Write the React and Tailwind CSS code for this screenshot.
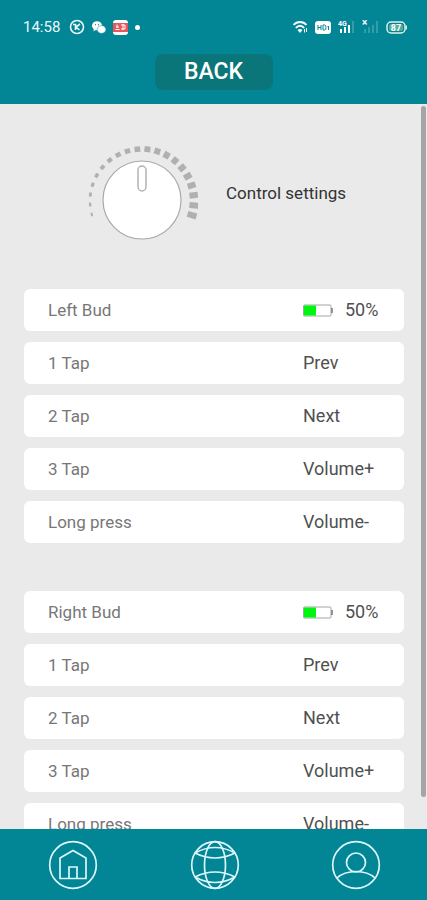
import React from "react";

const TEAL = "#028595";

const taps = [
  ["1 Tap", "Prev"],
  ["2 Tap", "Next"],
  ["3 Tap", "Volume+"],
  ["Long press", "Volume-"],
];

function SignalBars({ label, weak }) {
  return (
    <svg width="17" height="14" viewBox="0 0 17 14" aria-hidden="true">
      <text x="0" y="6" fontSize={weak ? 10 : 7} fontWeight="700" fill="#fff">{label}</text>
      <g fill="#fff" fillOpacity={weak ? 0.2 : 1}>
        <rect x="2" y="9" width="2" height="4" />
        <rect x="6" y="7" width="2" height="6" />
        <rect x="10" y="5" width="2" height="8" />
      </g>
      <rect x="14" y="1" width="2" height="12" fill="#fff" fillOpacity="0.2" />
    </svg>
  );
}

function StatusBar() {
  return (
    <div className="flex h-[54px] items-center justify-between pl-[23px] pr-5 text-[#e9f8fa]">
      <div className="flex items-center gap-[7px]">
        <span className="mr-0.5 text-[15px] leading-5">14:58</span>
        <svg width="16" height="16" viewBox="0 0 16 16" fill="none" stroke="currentColor" strokeWidth="1.600" aria-hidden="true">
          <circle cx="8" cy="8" r="6.500" />
          <path d="M6.500 5v6M11 5L7 8l3.500 3M4 5.500h3" />
        </svg>
        <svg width="14" height="13" viewBox="0 0 14 13" aria-hidden="true">
          <ellipse cx="5" cy="4.800" rx="5" ry="4.500" fill="#fff" />
          <path d="M2 7.500L1.500 10.500L5 8Z" fill="#fff" />
          <circle cx="3.500" cy="3.700" r="0.600" fill={TEAL} />
          <circle cx="6.500" cy="3.700" r="0.600" fill={TEAL} />
          <ellipse cx="9.500" cy="8.500" rx="4.400" ry="3.900" fill="#fff" stroke={TEAL} strokeWidth="0.500" />
        </svg>
        <svg width="15" height="15" viewBox="0 0 15 15" aria-hidden="true">
          <rect width="15" height="15" rx="3" fill="#fff" />
          <rect y="3" width="15" height="9" fill="#e5575b" />
          <path d="M4 4.500v3.500M2.500 9.500h4M3 7h3M8 5h4v4H8M10 4v6" stroke="#fff" strokeWidth="1" fill="none" />
        </svg>
        <span className="size-[5px] rounded-full bg-white" />
      </div>
      <div className="flex items-center gap-[7px]">
        <svg width="15" height="13" viewBox="0 0 15 13" fill="none" stroke="#fff" strokeWidth="1.800" aria-hidden="true">
          <path d="M0.500 4C4 0 10 0 13.500 4M2.800 7C5.500 4 8.500 4 11.200 7" />
          <path d="M4.500 9Q7 7 9.500 9L7 12Z" fill="#fff" stroke="none" />
          <path d="M11.500 8v3.500M13.500 7v4" strokeWidth="1" />
        </svg>
        <svg width="16" height="13" viewBox="0 0 16 13" aria-hidden="true">
          <rect width="16" height="13" rx="3" fill="#fff" />
          <path d="M3 4v5M6 4v5M3 6.500h3M8 4v5h1.500Q11 9 11 6.500T9.500 4H8M12.500 6l1-1v4" stroke={TEAL} strokeWidth="1" fill="none" />
        </svg>
        <SignalBars label="4G" />
        <SignalBars label="×" weak />
        <svg width="21" height="13" viewBox="0 0 21 13" aria-hidden="true">
          <rect x="1" y="1" width="18" height="11" rx="4" fill="none" stroke="#d9f3ee" strokeWidth="1.500" />
          <rect x="3" y="3" width="14" height="7" rx="2" fill="#5aa899" />
          <path d="M20.300 4.500v4" stroke="#d9f3ee" strokeWidth="1.300" />
          <text x="10" y="9.700" fontSize="9" fontWeight="700" fill="#fff" textAnchor="middle">87</text>
        </svg>
      </div>
    </div>
  );
}

function Knob() {
  const ticks = Array.from({ length: 20 }, (_, i) => ({
    angle: -105 + i * 11.1,
    depth: 2 + i * 0.38,
    width: Math.min(6, 3.5 + i * 0.25),
  }));
  return (
    <svg className="shrink-0" width="112" height="98" viewBox="0 0 112 98" aria-hidden="true">
      {ticks.map((t) => (
        <rect
          key={t.angle}
          x={56 - t.width / 2}
          y={5 - t.depth / 2}
          width={t.width}
          height={t.depth}
          fill="#b0b0b0"
          transform={`rotate(${t.angle} 56 57)`}
        />
      ))}
      <circle cx="56" cy="56" r="39" fill="#fff" stroke="#a9a9a9" strokeWidth="1.200" />
      <rect x="52" y="22" width="8" height="25" rx="4" fill="#fff" stroke="#b3b3b3" strokeWidth="1.500" />
    </svg>
  );
}

function Battery() {
  return (
    <svg width="30" height="13" viewBox="0 0 30 13" aria-hidden="true">
      <rect x="0.500" y="1" width="27.500" height="11" rx="1" fill="#fff" stroke="#a5a5a5" />
      <rect x="1" y="1.500" width="12" height="10" fill="#00f510" />
      <path d="M29 4v5" stroke="#777" strokeWidth="1.500" />
    </svg>
  );
}

const rowClass = "flex h-[42px] w-full items-center justify-between rounded-md bg-white pl-6 text-left leading-6";

function BudGroup({ name }) {
  return (
    <section className="flex flex-col gap-[11px]">
      <div className={rowClass}>
        <h2 className="text-[17px] text-[#777]">{name}</h2>
        <div className="flex w-[101px] items-center gap-3 text-lg leading-6 text-[#505050]">
          <Battery />
          <span>50%</span>
        </div>
      </div>
      {taps.map(([label, value]) => (
        <button key={label} type="button" className={rowClass}>
          <span className="text-[17px] text-[#777]">{label}</span>
          <span className="w-[101px] text-lg leading-6 text-[#505050]">{value}</span>
        </button>
      ))}
    </section>
  );
}

function NavIcon({ children }) {
  return (
    <svg width="50" height="50" viewBox="0 0 50 50" fill="none" stroke="#dcf7fb" strokeWidth="1.700" aria-hidden="true">
      <circle cx="25" cy="25" r="23.300" />
      {children}
    </svg>
  );
}

export default function App() {
  return (
    <div className="flex h-dvh flex-col bg-[#eaeaea] font-[Roboto,sans-serif]">
      <header className="flex h-[104px] shrink-0 flex-col items-center bg-[#028595]">
        <div className="w-full">
          <StatusBar />
        </div>
        <button type="button" className="h-9 w-[118px] rounded-lg bg-[#0b7679] text-[23px] font-medium leading-9 text-white">
          BACK
        </button>
      </header>

      <div className="relative min-h-0 flex-1">
        <main className="h-full overflow-y-auto pl-6 pr-[23px] [scrollbar-width:none]">
          <div className="flex h-[185px] items-center pb-[7px] pl-[62px]">
            <Knob />
            <h1 className="ml-7 text-[17px] leading-6 text-[#333]">Control settings</h1>
          </div>
          <div className="flex flex-col gap-12 pb-6">
            <BudGroup name="Left Bud" />
            <BudGroup name="Right Bud" />
          </div>
        </main>
        <div className="absolute right-px top-0.5 bottom-8 w-[5px] rounded-sm bg-[#a5a5a5]" />
      </div>

      <nav className="flex h-[71px] shrink-0 items-center justify-between bg-[#028595] pl-12 pr-[46px]">
        <a href="#home" aria-label="Home">
          <NavIcon>
            <path d="M12 38.500V18L25 10.500L38 18v20.500ZM21 38V27h8v11" />
          </NavIcon>
        </a>
        <a href="#world" aria-label="World">
          <NavIcon>
            <ellipse cx="25" cy="25" rx="10.500" ry="23.300" />
            <path d="M5 13Q25 23 45 13M5 37Q25 27 45 37M5 13Q25 2 45 13M5 37Q25 48 45 37" />
          </NavIcon>
        </a>
        <a href="#profile" aria-label="Profile">
          <NavIcon>
            <circle cx="25" cy="22.500" r="9.500" />
            <path d="M6 38Q13 31.500 25 31.500T44 38" />
          </NavIcon>
        </a>
      </nav>
    </div>
  );
}
